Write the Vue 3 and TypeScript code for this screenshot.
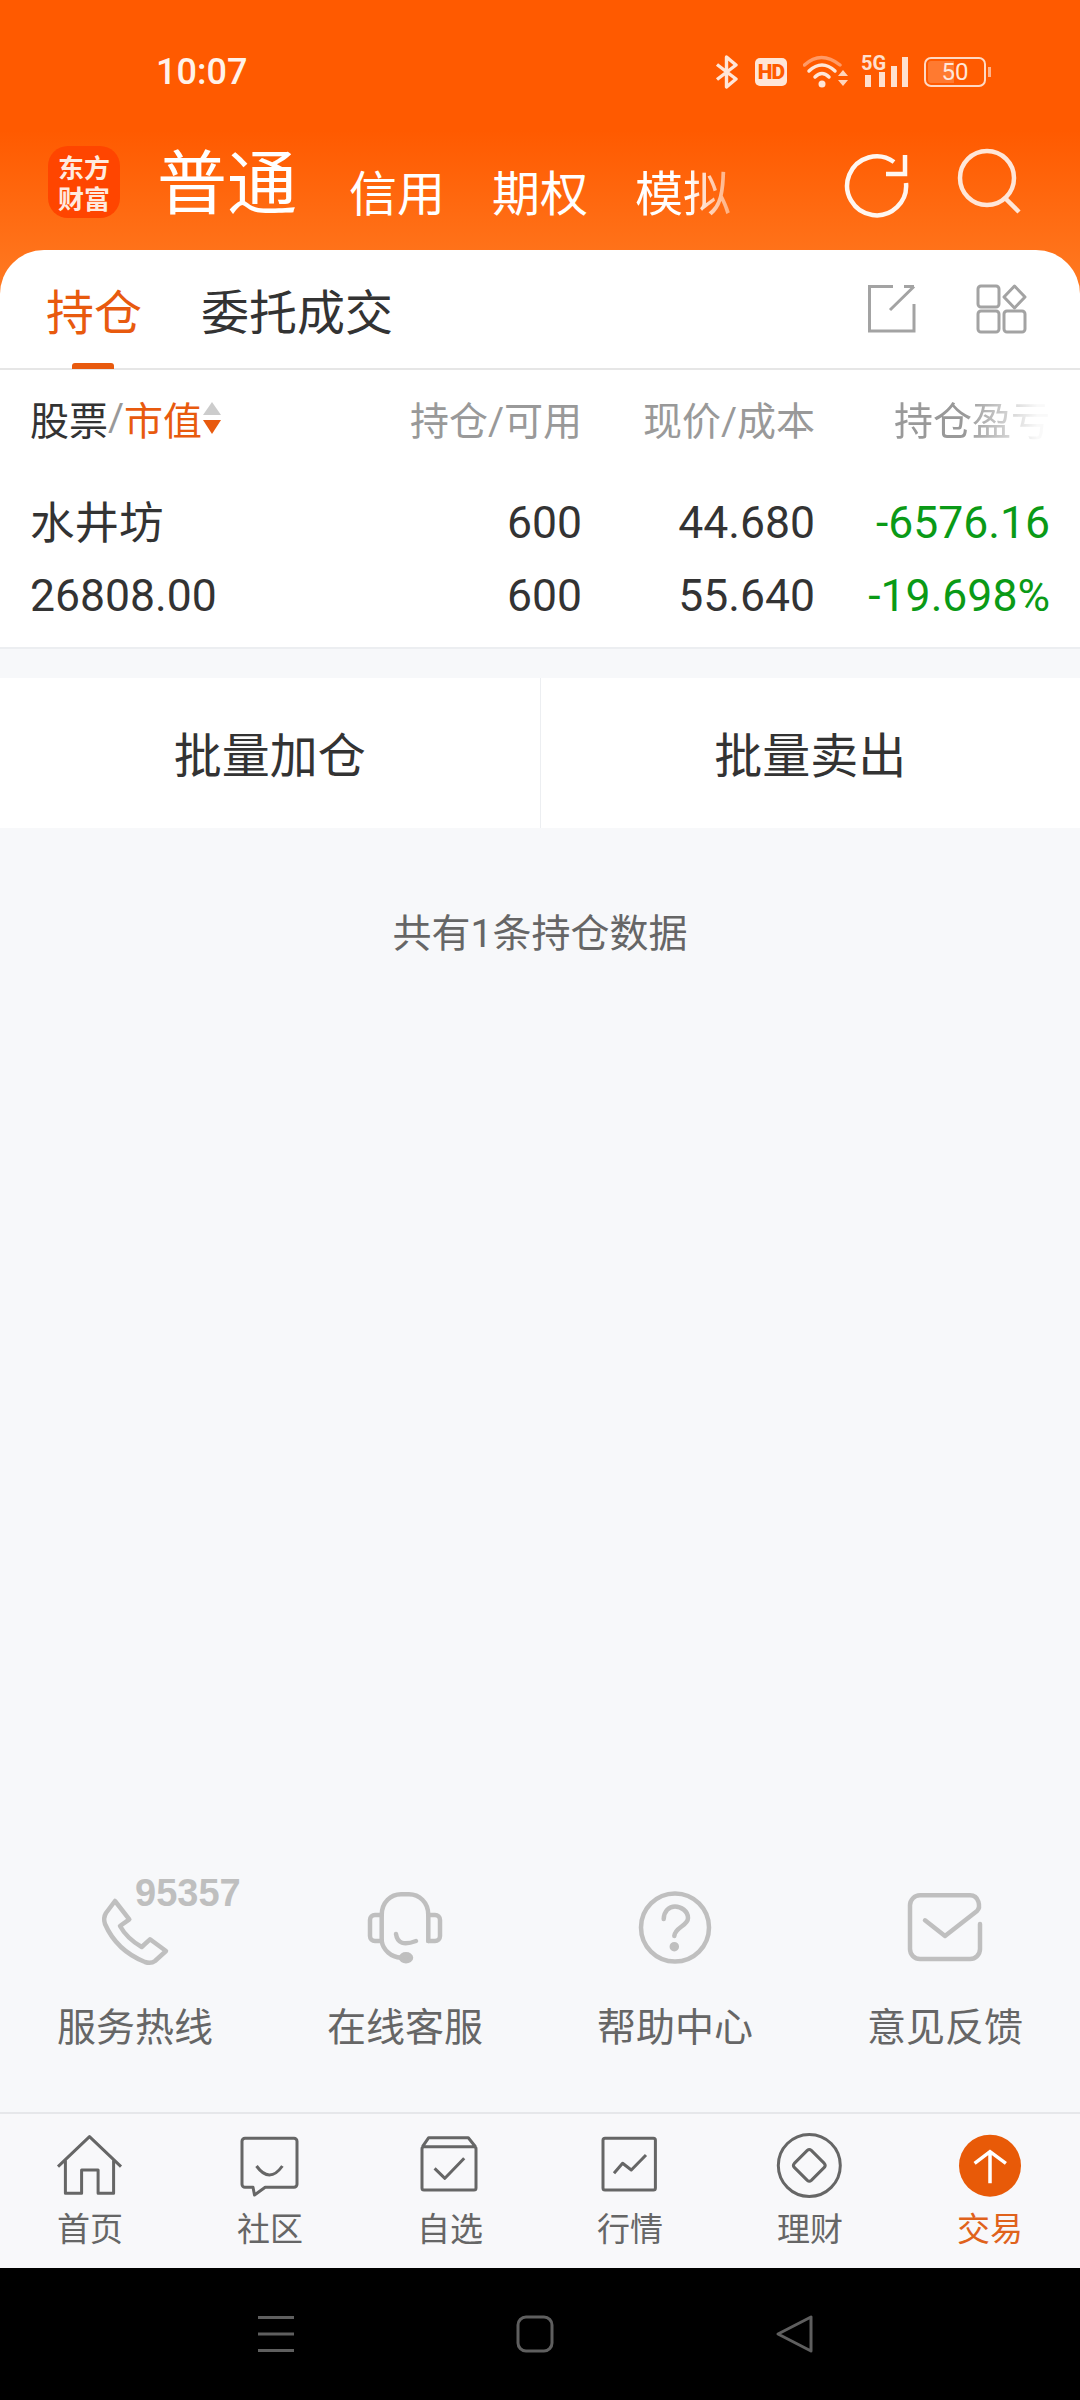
<script setup lang="ts">
interface Cell {
  main: string
  hold: string
  price: string
  profit: string
}

interface NavItem {
  label: string
  d: string
}

const rows: Cell[] = [
  { main: '水井坊', hold: '600', price: '44.680', profit: '-6576.16' },
  { main: '26808.00', hold: '600', price: '55.640', profit: '-19.698%' }
]

const navItems: NavItem[] = [
  {
    label: '首页',
    d: 'M3 36.7 34.5 6.7 66 36.7M10.4 30v33.3h16.2V40h16.5v23.3h15.5V30'
  },
  {
    label: '社区',
    d: 'M10 8.3h49a3 3 0 0 1 3 3v43a3 3 0 0 1-3 3H30.2L19.5 65 18 57.3h-8a3 3 0 0 1-3-3v-43a3 3 0 0 1 3-3zM21.5 36Q34.5 54 47.4 36'
  },
  {
    label: '自选',
    d: 'M9 16.7h50a2 2 0 0 1 2 2V58a2 2 0 0 1-2 2H9a2 2 0 0 1-2-2V18.7a2 2 0 0 1 2-2zM7.5 16.7l6.2-9h39.6l7.2 9M19.6 38.3l10.3 10 19.3-20'
  },
  {
    label: '行情',
    d: 'M10 8.3h48.4a2 2 0 0 1 2 2V58a2 2 0 0 1-2 2H10a2 2 0 0 1-2-2V10.3a2 2 0 0 1 2-2zM19 43.3l8.6-10 8.7 6.7L51 25'
  },
  {
    label: '理财',
    d: 'M3.3 35.4a31 31 0 1 0 62 0 31 31 0 1 0-62 0zM32.3 20.4a3 3 0 0 1 4 0l13 13a3 3 0 0 1 0 4l-13 13a3 3 0 0 1-4 0l-13-13a3 3 0 0 1 0-4z'
  }
]
</script>

<template>
  <div class="screen">
    <header class="hero">
      <div class="status-bar">
        <span class="clock">10:07</span>
        <div class="status-icons">
          <svg width="24" height="34" viewBox="0 0 24 34" fill="none" stroke="#ffe6d8" stroke-width="3.4" stroke-linejoin="round">
            <path d="M2 9.5 21 24 11.5 32V2L21 10 2 24.5" />
          </svg>
          <span class="hd">HD</span>
          <svg width="46" height="34" viewBox="0 0 46 34" fill="none" stroke-linecap="round">
            <path d="M1.5 10Q18 -5 37 10" stroke="#ff9a66" stroke-width="3.5" />
            <path d="M6 16Q19 4 32 16M12 22Q19 15 26 22" stroke="#ffe6d8" stroke-width="3.5" />
            <circle cx="19" cy="29" r="3.5" fill="#ffe6d8" />
            <path d="M35 21h10l-5-6zM35 25h10l-5 6z" fill="#ffd4bc" />
          </svg>
          <svg class="signal" width="48" height="40" viewBox="0 -3 48 40">
            <text x="0" y="15" class="five-g">5G</text>
            <rect x="4" y="20" width="6" height="12" fill="#ffe0cf" />
            <rect x="18" y="17" width="6" height="15" fill="#ffe0cf" />
            <rect x="30" y="11" width="6" height="21" fill="#ffe0cf" />
            <rect x="41" y="2" width="6" height="30" fill="#ffe0cf" />
          </svg>
          <div class="battery">
            <span class="battery-fill"></span>
            <span class="battery-text">50</span>
          </div>
        </div>
      </div>

      <div class="account-bar">
        <div class="logo">东方<br />财富</div>
        <div class="account-tabs">
          <span class="account-active">普通</span>
          <span class="account-tab">信用</span>
          <span class="account-tab">期权</span>
          <span class="account-tab account-tab-fade">模拟</span>
        </div>
        <svg class="refresh" width="70" height="70" viewBox="0 0 70 70" fill="none" stroke="#fff6f0" stroke-width="4.5">
          <path d="M53 14A29.5 29.5 0 1 0 65 35" />
          <path d="M64 7v19H45" />
        </svg>
        <svg class="search" width="70" height="70" viewBox="0 0 70 70" fill="none" stroke="#ffe6d8" stroke-width="4.5">
          <circle cx="32" cy="32" r="27" />
          <path d="M50 52 64 66" />
        </svg>
      </div>

      <div class="page-tabs">
        <div class="page-tab page-tab-active">持仓<i class="tab-line"></i></div>
        <div class="page-tab">委托成交</div>
        <svg class="tool-share" width="50" height="50" viewBox="0 0 50 50" fill="none" stroke="#a3a3a3" stroke-width="3">
          <path d="M26 2.5H2.5V47H47V20" />
          <path d="M23 26 47 2.5M37 2.5h10" />
        </svg>
        <svg class="tool-grid" width="52" height="50" viewBox="0 0 52 50" fill="none" stroke="#a3a3a3" stroke-width="3">
          <rect x="2" y="2" width="21" height="21" rx="3" />
          <rect x="2" y="27" width="21" height="21" rx="3" />
          <rect x="28" y="27" width="21" height="21" rx="3" />
          <path d="M38.5 2 49 13 38.5 24 28 13z" stroke-linejoin="round" />
        </svg>
      </div>
    </header>

    <main class="content">
      <section class="table">
        <div class="table-head">
          <div class="head-name">
            <span class="head-dark">股票</span><span class="head-slash">/</span><span class="head-orange">市值</span>
            <span class="sort">
              <i class="sort-up"></i>
              <i class="sort-down"></i>
            </span>
          </div>
          <div>持仓/可用</div>
          <div>现价/成本</div>
          <div><span class="head-fade">持仓盈亏</span></div>
        </div>
        <div v-for="row in rows" :key="row.main" class="table-row">
          <div class="row-name">{{ row.main }}</div>
          <div>{{ row.hold }}</div>
          <div>{{ row.price }}</div>
          <div class="row-profit">{{ row.profit }}</div>
        </div>
      </section>

      <section class="batch">
        <div class="batch-btn">批量加仓</div>
        <div class="batch-btn">批量卖出</div>
      </section>

      <p class="summary">共有1条持仓数据</p>

      <section class="services">
        <div class="service">
          <div class="service-icon">
            <svg width="80" height="80" viewBox="0 0 80 80" fill="none" stroke="#bfbfbf" stroke-width="4.5" stroke-linejoin="round">
              <path d="M20 13 34.3 31.3 25 38C30 47 38 54 46.7 59L55 51.3 71 63 60 73Q56 76 50 74C30 66 17 52 10 36Q8 30 11 25z" />
            </svg>
            <span class="hotline">95357</span>
          </div>
          <span class="service-label">服务热线</span>
        </div>
        <div class="service">
          <div class="service-icon">
            <svg width="80" height="80" viewBox="0 0 80 80" fill="none" stroke="#bfbfbf" stroke-width="4.5" stroke-linecap="round" stroke-linejoin="round">
              <path d="M16.7 53V27C16.7 14 26 6.3 36 6.3h8C54 6.3 63.3 14 63.3 27v26" />
              <path d="M16.7 27H10a5 5 0 0 0-5 5v16a5 5 0 0 0 5 5h6.7M63.3 27H70a5 5 0 0 1 5 5v16a5 5 0 0 1-5 5h-6.7" />
              <path d="M31 46Q33 60 51 53" />
              <path d="M16.7 53C18 62 26 69 36 69.7" />
              <ellipse cx="41" cy="69.7" rx="5" ry="3.5" fill="#bfbfbf" />
            </svg>
          </div>
          <span class="service-label">在线客服</span>
        </div>
        <div class="service">
          <div class="service-icon">
            <svg width="80" height="80" viewBox="0 0 80 80" fill="none" stroke="#bfbfbf" stroke-width="4.5" stroke-linecap="round">
              <circle cx="40" cy="39.5" r="34" />
              <path d="M28.7 31C29 23 34 18.5 40 18.5S53 23 53 30C53 38 40 39 39.3 48" />
              <circle cx="39.3" cy="58.7" r="2.5" fill="#bfbfbf" />
            </svg>
          </div>
          <span class="service-label">帮助中心</span>
        </div>
        <div class="service">
          <div class="service-icon">
            <svg width="80" height="80" viewBox="0 0 80 80" fill="none" stroke="#bfbfbf" stroke-width="4.5" stroke-linecap="round" stroke-linejoin="round">
              <path d="M20 32.3 40 48 72 23C76 19 74 7.3 65 7.3H15A10 10 0 0 0 5 17.3V61A10 10 0 0 0 15 71H65A10 10 0 0 0 75 61V36" />
            </svg>
          </div>
          <span class="service-label">意见反馈</span>
        </div>
      </section>
    </main>

    <nav class="tabbar">
      <div v-for="item in navItems" :key="item.label" class="tabbar-item">
        <svg width="70" height="70" viewBox="0 0 70 70" fill="none" stroke="#666" stroke-width="3" stroke-linejoin="round">
          <path :d="item.d" />
        </svg>
        <span>{{ item.label }}</span>
      </div>
      <div class="tabbar-item tabbar-active">
        <svg width="70" height="70" viewBox="0 0 70 70" fill="none">
          <circle cx="35" cy="35.7" r="31" fill="#e85a08" />
          <path d="M35 53.3V21.7M19.6 33.3 35 21.7l15.9 11.6" stroke="#fff" stroke-width="3.5" />
        </svg>
        <span>交易</span>
      </div>
    </nav>

    <footer class="system-bar">
      <svg width="38" height="40" viewBox="0 0 38 40" fill="#5f5f5f">
        <rect x="1" y="2" width="36" height="3" />
        <rect x="1" y="18.5" width="36" height="3" />
        <rect x="1" y="35" width="36" height="3" />
      </svg>
      <svg width="40" height="40" viewBox="0 0 40 40" fill="none" stroke="#5f5f5f" stroke-width="3">
        <rect x="3" y="3" width="34" height="34" rx="8" />
      </svg>
      <svg width="40" height="40" viewBox="0 0 40 40" fill="none" stroke="#5f5f5f" stroke-width="3" stroke-linejoin="round">
        <path d="M36 3v34L3 20z" />
      </svg>
    </footer>
  </div>
</template>

<style>
html,
body {
  margin: 0;
  background: #f7f8fa;
}
</style>

<style scoped>
.screen {
  width: 1080px;
  height: 2400px;
  display: flex;
  flex-direction: column;
  overflow: hidden;
  background: #f7f8fa;
  font-family: Roboto, "Noto Sans CJK SC", sans-serif;
  color: #333;
}

.hero {
  background: linear-gradient(180deg, #ff5a00 0, #ff5a00 130px, #ff7a22 290px);
}

.status-bar {
  height: 144px;
  padding: 0 88px 0 156px;
  display: flex;
  align-items: center;
  justify-content: space-between;
  box-sizing: border-box;
  color: #fff;
}

.clock {
  font-size: 36px;
  font-weight: 500;
  color: #fff2ea;
}

.status-icons {
  display: flex;
  align-items: center;
  gap: 16px;
}

.hd {
  width: 32px;
  height: 28px;
  border-radius: 5px;
  background: #ffe6d8;
  color: #ff5a00;
  font-size: 21px;
  font-weight: 900;
  line-height: 28px;
  text-align: center;
  letter-spacing: -1px;
}

.signal {
  margin-left: -4px;
  margin-right: -1px;
}

.five-g {
  font-family: Roboto, sans-serif;
  font-size: 20px;
  font-weight: 700;
  fill: #ffe0cf;
}

.battery {
  position: relative;
  width: 62px;
  height: 30px;
  border: 2px solid #ffd9c4;
  border-radius: 7px;
  box-sizing: border-box;
  margin-right: 6px;
  text-align: center;
}

.battery::after {
  content: "";
  position: absolute;
  right: -7px;
  top: 8px;
  width: 3px;
  height: 10px;
  background: #ffb48c;
}

.battery-fill {
  position: absolute;
  left: 2px;
  top: 2px;
  bottom: 2px;
  width: 26px;
  border-radius: 3px 0 0 3px;
  background: #ff7a30;
}

.battery-text {
  position: relative;
  font-size: 24px;
  line-height: 26px;
  color: #ffe6d8;
}

.account-bar {
  height: 106px;
  padding-left: 48px;
  display: flex;
  align-items: flex-start;
  box-sizing: border-box;
}

.logo {
  width: 72px;
  height: 72px;
  margin-top: 2px;
  padding-top: 5px;
  box-sizing: border-box;
  border-radius: 20px;
  background: #ff4500;
  color: #ffeadf;
  text-align: center;
  font-size: 26px;
  font-weight: 700;
  line-height: 31px;
  font-family: "Noto Sans CJK SC", sans-serif;
}

.account-tabs {
  width: 640px;
  margin-left: 37px;
  display: flex;
  align-items: flex-start;
  color: #fff;
}

.account-active {
  font-size: 70px;
  line-height: 78px;
  margin: 2px 52px 0 0;
}

.account-tab {
  font-size: 48px;
  line-height: 68px;
  margin: 17px 47px 0 0;
}

.account-tab-fade {
  -webkit-mask-image: linear-gradient(90deg, #000 55%, rgba(0, 0, 0, 0.45) 100%);
  mask-image: linear-gradient(90deg, #000 55%, rgba(0, 0, 0, 0.45) 100%);
}

.refresh {
  margin: 4px 0 0 44px;
}

.search {
  margin: 2px 0 0 44px;
}

.page-tabs {
  height: 120px;
  padding: 0 52px 0 46px;
  display: flex;
  align-items: center;
  box-sizing: border-box;
  background: #fff;
  border-radius: 44px 44px 0 0;
  border-bottom: 2px solid #e6e6e6;
}

.page-tab {
  position: relative;
  font-size: 48px;
  margin-right: 59px;
  color: #333;
}

.page-tab-active {
  color: #e85a0e;
}

.tab-line {
  position: absolute;
  left: 26px;
  bottom: -25px;
  width: 42px;
  height: 6px;
  border-radius: 3px 3px 0 0;
  background: #e85a0e;
}

.tool-share {
  margin-left: auto;
  margin-right: 59px;
}

.content {
  flex: 1;
  display: flex;
  flex-direction: column;
  min-height: 0;
}

.table {
  background: #fff;
  padding-bottom: 15px;
  border-bottom: 2px solid #eceef1;
}

.table-head,
.table-row {
  display: grid;
  grid-template-columns: 1fr 233px 233px 235px;
  padding: 0 30px;
  text-align: right;
}

.table-head {
  height: 96px;
  margin-bottom: 20px;
  align-items: center;
  font-size: 39px;
  color: #999;
}

.head-name {
  display: flex;
  align-items: center;
  text-align: left;
}

.head-dark {
  color: #333;
}

.head-slash {
  color: #999;
}

.head-orange {
  color: #e85a0e;
}

.head-fade {
  display: inline-block;
  -webkit-mask-image: linear-gradient(90deg, #000 45%, rgba(0, 0, 0, 0.06) 92%);
  mask-image: linear-gradient(90deg, #000 45%, rgba(0, 0, 0, 0.06) 92%);
}

.sort {
  display: flex;
  flex-direction: column;
  gap: 5px;
  margin-left: 1px;
}

.sort-up {
  width: 0;
  height: 0;
  border-left: 9px solid transparent;
  border-right: 9px solid transparent;
  border-bottom: 13px solid #ccc;
}

.sort-down {
  width: 0;
  height: 0;
  border-left: 9px solid transparent;
  border-right: 9px solid transparent;
  border-top: 14px solid #e85a0e;
}

.table-row {
  height: 73px;
  align-items: center;
  font-size: 44.5px;
  color: #333;
}

.row-name {
  text-align: left;
}

.table-head + .table-row .row-name {
  margin-bottom: 6px;
}

.row-profit {
  color: #0a9a16;
}

.batch {
  margin-top: 29px;
  height: 150px;
  display: flex;
  background: #fff;
}

.batch-btn {
  flex: 1;
  display: flex;
  align-items: center;
  justify-content: center;
  padding-bottom: 3px;
  box-sizing: border-box;
  font-size: 48px;
  color: #333;
}

.batch-btn + .batch-btn {
  border-left: 1px solid #eceef1;
}

.summary {
  margin: 74px 0 0;
  text-align: center;
  font-size: 39px;
  line-height: 64px;
  color: #666;
}

.services {
  margin-top: auto;
  padding-bottom: 56px;
  display: grid;
  grid-template-columns: repeat(4, 1fr);
}

.service {
  display: flex;
  flex-direction: column;
  align-items: center;
}

.service-icon {
  position: relative;
  width: 80px;
  height: 80px;
}

.hotline {
  position: absolute;
  left: 40px;
  top: -17px;
  font-family: "Liberation Sans", sans-serif;
  font-size: 38px;
  font-weight: 700;
  line-height: 44px;
  color: #bfbfbf;
}

.service-label {
  margin-top: 32px;
  font-size: 39px;
  line-height: 56px;
  color: #666;
}

.tabbar {
  height: 156px;
  display: grid;
  grid-template-columns: repeat(6, 1fr);
  box-sizing: border-box;
  padding-top: 16px;
  border-top: 2px solid #e6e7ea;
  background: #f8f8fa;
}

.tabbar-item {
  display: flex;
  flex-direction: column;
  align-items: center;
  gap: 8px;
  font-size: 33px;
  line-height: 44px;
  color: #666;
}

.tabbar-active {
  color: #e0621c;
}

.system-bar {
  height: 132px;
  background: #000;
  display: flex;
  align-items: flex-start;
  padding: 46px 0 0 257px;
  box-sizing: border-box;
  gap: 220px;
}
</style>
